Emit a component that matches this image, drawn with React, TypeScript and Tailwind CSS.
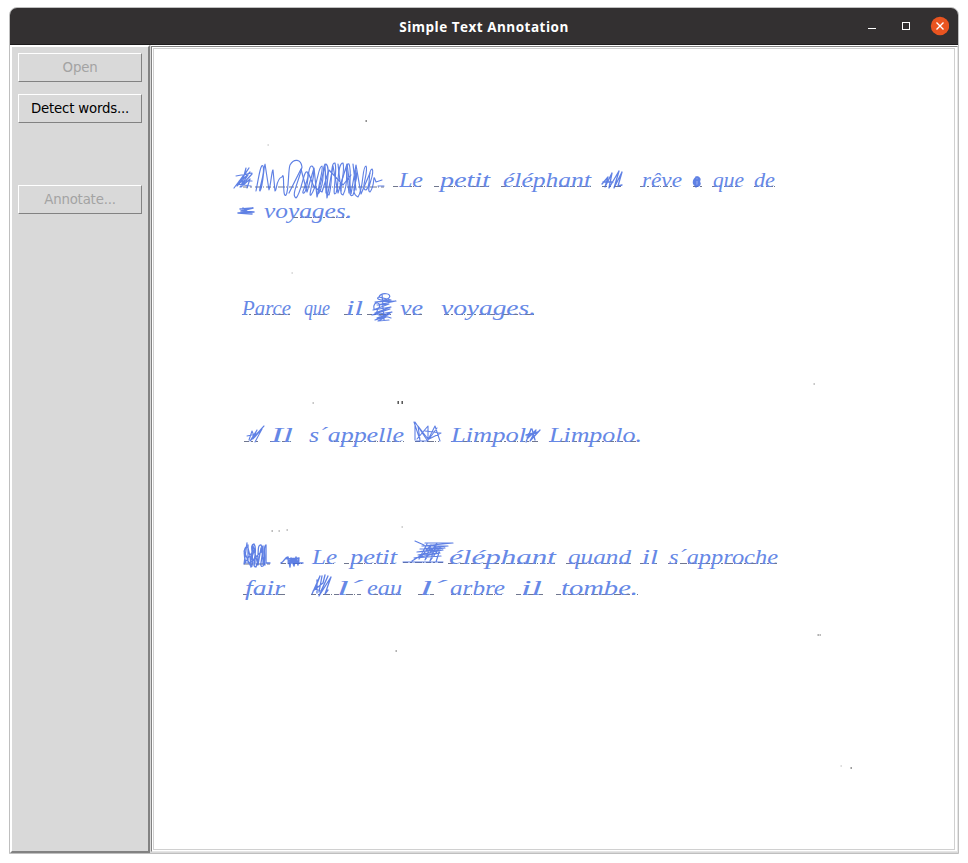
import React from "react";

type Word = [text: string, x: number, baseline: number, width: number];

const WORDS: Word[] = [
  ["Le", 399, 186, 24], ["petit", 440, 186, 50], ["éléphant", 503, 186, 88],
  ["rêve", 642, 186, 40], ["que", 713, 186, 31], ["de", 754, 186, 21],
  ["voyages.", 264, 217, 88],
  ["Parce", 242, 314, 49], ["que", 304, 314, 26], ["il", 346, 314, 17],
  ["ve", 400, 314, 23], ["voyages.", 441, 314, 95],
  ["Il", 271, 441, 22], ["s´appelle", 309, 441, 95],
  ["Limpol", 451, 441, 75], ["Limpolo.", 549, 441, 93],
  ["Le", 312, 563, 25], ["petit", 350, 563, 47], ["éléphant", 449, 563, 107],
  ["quand", 568, 563, 63], ["il", 642, 563, 16], ["s´approche", 669, 563, 109],
  ["fair", 245, 594, 40], ["l´", 337, 594, 26], ["eau", 367, 594, 35],
  ["l´", 420, 594, 27], ["arbre", 450, 594, 55], ["il", 521, 594, 21],
  ["tombe.", 561, 594, 77],
];

// Ruled line left over from the scan: start, end and height
const RULES: [number, number, number][] = [
  [243, 384, 187], [393, 421, 186.5], [434, 490, 186.5], [501, 592, 186.5], [602, 622, 186.5],
  [640, 678, 186.5], [693, 702, 186.5], [712, 742, 186.5], [754, 775, 186.5],
  [293, 350, 217.5], [242, 290, 314.5], [306, 329, 314.5], [344, 362, 314.5],
  [367, 391, 314.5], [406, 422, 314.5], [444, 534, 314.5],
  [244, 258, 441.5], [270, 292, 441.5], [310, 316, 441.5], [334, 404, 441.5], [415, 439, 441.5],
  [451, 538, 441.5], [549, 636, 441.5],
  [244, 270, 564], [281, 303, 563.5], [313, 334, 563.5], [344, 396, 563.5],
  [403, 443, 562.5], [448, 555, 563.5], [566, 631, 563.5], [640, 657, 563.5], [668, 777, 563.5],
  [243, 286, 594.5], [311, 361, 594.5], [373, 402, 594.5], [418, 434, 594.5],
  [451, 502, 594.5], [516, 543, 594.5], [556, 638, 594.5],
];

const SCRIBBLES: { d: string; w: number }[] = [
  { d: "M234 188L249 168L237 186L250 172L240 187L252 174M236 176L252 173M239 181H252M237 184L251 186M246 168L241 187L250 179L247 188", w: 1.2 },
  { d: "M256 191C259 175 261 163 263 166C266 171 258 191 260 191C263 188 264 164 265 164L269 190C270 190 272 169 273 170L275 191C277 191 276 178 282 177C285 169 282 199 286 195C289 191 288 170 290 165C294 158 301 159 302 167C298 184 291 195 296 198C301 194 304 169 307 172C312 176 299 195 304 193C309 190 307 165 312 166C318 169 307 198 311 195C318 185 318 166 322 166C324 169 315 198 319 193C326 181 321 165 326 164C332 168 323 195 329 195C333 183 330 162 335 163C338 172 331 199 336 193C339 186 337 163 343 163C346 172 337 195 343 195C350 183 344 162 349 164C353 173 346 200 353 195C357 187 355 163 356 172C360 178 348 192 358 197C364 188 362 166 366 166C369 171 360 190 366 190C372 185 367 171 372 169C376 173 365 190 370 192C376 184 372 171 376 182L382 180M378 186H384", w: 1.15 },
  { d: "M289 193L301 169L307 192L314 168L317 197L325 166L327 198L333 166L338 193L347 164L351 194L356 165L361 194L370 173M308 172L314 187L322 192L329 170L343 185L351 175M325 164L326 193M338 164L341 191M353 164L356 190M346 167L349 193", w: 1.2 },
  { d: "M240 209L253 208L241 211L254 212L238 213L252 214M243 208L250 214", w: 1.5 },
  { d: "M602 184L608 177L605 187L612 173L609 188L619 171L614 188L622 172L618 186L622 185M603 182H613", w: 1.3 },
  { d: "M697 177C691 181 694 188 698 185C702 178 697 174 695 180C693 187 700 188 700 183M694 181L700 179M696 177V187M698 178V186", w: 1.6 },
  { d: "M379 297C381 292 393 293 389 298C384 302 374 299 379 297L391 300L375 302L396 301L377 305L389 304L373 310L391 307L375 313L390 309L372 315L392 312L377 318L390 314L375 320L386 317L378 321L389 320M374 309C372 300 384 302 378 309C373 317 383 315 391 318M382 294L384 320", w: 1.2 },
  { d: "M249 440L252 431L254 436L257 430L250 441L264 426L253 439L262 429L255 442M247 436L256 434", w: 1.1 },
  { d: "M415 440V422L427 440M414 422L420 440L418 426L428 439V426L417 439M428 440L435 426L440 441M425 431L441 433L429 439L437 428M416 441H428", w: 1.1 },
  { d: "M526 442L531 429L528 438L536 430L530 441L540 430M526 435L538 432L527 437M532 429L535 440", w: 1.3 },
  { d: "M246 563C242 550 246 544 248 548C253 563 249 570 252 566C254 553 249 545 254 544C259 550 250 567 256 567C260 558 256 544 261 545C266 551 257 569 263 566C267 562 262 546 266 545V563H270M244 551L250 565L253 546L258 565L261 548L265 565M247 543L244 564L255 548L250 563L262 551M248 545V563M255 547V564M263 546V564", w: 1.3 },
  { d: "M281 563C284 562 285 557 288 557L290 567L291 558L294 566L296 557L298 565L299 558M287 559L299 558L288 561H299L288 563H303", w: 1.4 },
  { d: "M415 541L424 545M425 543H453L422 546H448L420 549L445 548L417 552L443 550L418 555L440 553L414 558L441 556M403 562H443M427 544L419 559L431 545L425 560L437 543L430 561L441 546L436 562M412 561L420 556", w: 1.2 },
  { d: "M312 594L320 576L315 589L321 591L328 576L319 596L331 577L325 594L328 590M313 591L323 583L325 575M317 580V593M322 576L319 592", w: 1.3 },
];

const SPECKS: [number, number, number][] = [
  [366, 121, 1], [268, 145, 0.3], [292, 273, 0.3], [313, 403, 0.5], [398, 402, 2],
  [402, 402, 2], [814, 384, 0.5], [272, 531, 0.6], [279, 531, 0.5], [287, 530, 0.5],
  [402, 527, 0.4], [396, 651, 0.7], [818, 635, 0.7], [820, 635, 0.6], [841, 766, 0.3], [851, 768, 0.9],
];

function Button({ children, disabled = false }: { children: React.ReactNode; disabled?: boolean }) {
  return (
    <button
      disabled={disabled}
      className={`flex h-[29px] w-[124px] shrink-0 items-center justify-center border border-t-white border-l-white border-r-[#828282] border-b-[#828282] bg-[#d9d9d9] font-['DejaVu_Sans',sans-serif] text-[13.33px] leading-none tracking-[-0.2px] ${disabled ? "text-[#a3a3a3]" : "text-black"}`}
    >
      {children}
    </button>
  );
}

function ScannedPage() {
  return (
    <svg viewBox="154 49 800 800" className="block h-full w-full" aria-label="Handwritten page">
      <g stroke="#343e60" strokeWidth="1" opacity="0.7" strokeDasharray="5 2 2 3 7 1 1 2">
        {RULES.map(([a, b, y], i) => <line key={i} x1={a} x2={b} y1={y} y2={y} />)}
      </g>
      <g className="font-['Liberation_Serif',serif] italic" fill="#6688e6">
        {WORDS.map(([t, x, y, w], i) => (
          <text key={i} x={x} y={y + 0.5} fontSize="22" textLength={w} lengthAdjust="spacingAndGlyphs">{t}</text>
        ))}
      </g>
      <g fill="none" stroke="#446be0" strokeLinecap="round" strokeLinejoin="round" opacity="0.85">
        {SCRIBBLES.map((s, i) => <path key={i} d={s.d} strokeWidth={s.w} />)}
      </g>
      <g fill="#333">
        {SPECKS.map(([x, y, n], i) => (
          <rect key={i} x={x - 0.5} y={y - 1} width="1.4" height={n > 1 ? 3 : 2} opacity={Math.min(n * 0.6, 0.9)} />
        ))}
      </g>
    </svg>
  );
}

export default function App() {
  return (
    <div className="h-[863px] w-[968px] overflow-hidden bg-white pt-[7px] pl-[9px]">
      <div className="flex h-[847px] w-[950px] flex-col overflow-hidden rounded-t-[8px] border border-[#bfbfbf] bg-[#d9d9d9]">
        <header className="grid h-[37px] shrink-0 grid-cols-[1fr_auto_1fr] items-center border-b border-[#1d1b1c] bg-[#333031]">
          <span />
          <h1 className="pt-[4px] text-center font-['Open_Sans','Noto_Sans',sans-serif] text-[13.5px] leading-none font-bold tracking-[0.5px] whitespace-nowrap text-white">
            Simple Text Annotation
          </h1>
          <div className="flex items-center justify-end pr-[9px]">
            <svg width="82" height="20" viewBox="0 0 82 20" fill="none">
              <path d="M1 12.5H9" stroke="white" />
              <rect x="35.5" y="6.5" width="7" height="7" stroke="white" />
              <circle cx="73" cy="10" r="9.2" fill="#e95420" />
              <path d="M69.5 6.5L76.5 13.5M76.5 6.5L69.5 13.5" stroke="white" strokeWidth="1.4" />
            </svg>
          </div>
        </header>
        <main className="flex min-h-0 flex-1">
          <aside className="flex w-[140px] shrink-0 flex-col border-2 border-t-white border-r-[#828282] border-b-[#828282] border-l-white bg-[#d9d9d9] pt-[6px] pl-[6px]">
            <Button disabled>Open</Button>
            <div className="mt-3"><Button>Detect words...</Button></div>
            <div className="mt-[62px]"><Button disabled>Annotate...</Button></div>
          </aside>
          <section className="ml-px min-w-0 flex-1 border-t border-white pb-px">
            <div className="h-full border border-t-[#828282] border-r-[#e5e5e5] border-b-[#e5e5e5] border-l-[#828282] bg-white p-px pr-[2px]">
              <div className="h-full border border-[#d0d0d0] bg-white">
                <ScannedPage />
              </div>
            </div>
          </section>
        </main>
      </div>
    </div>
  );
}
